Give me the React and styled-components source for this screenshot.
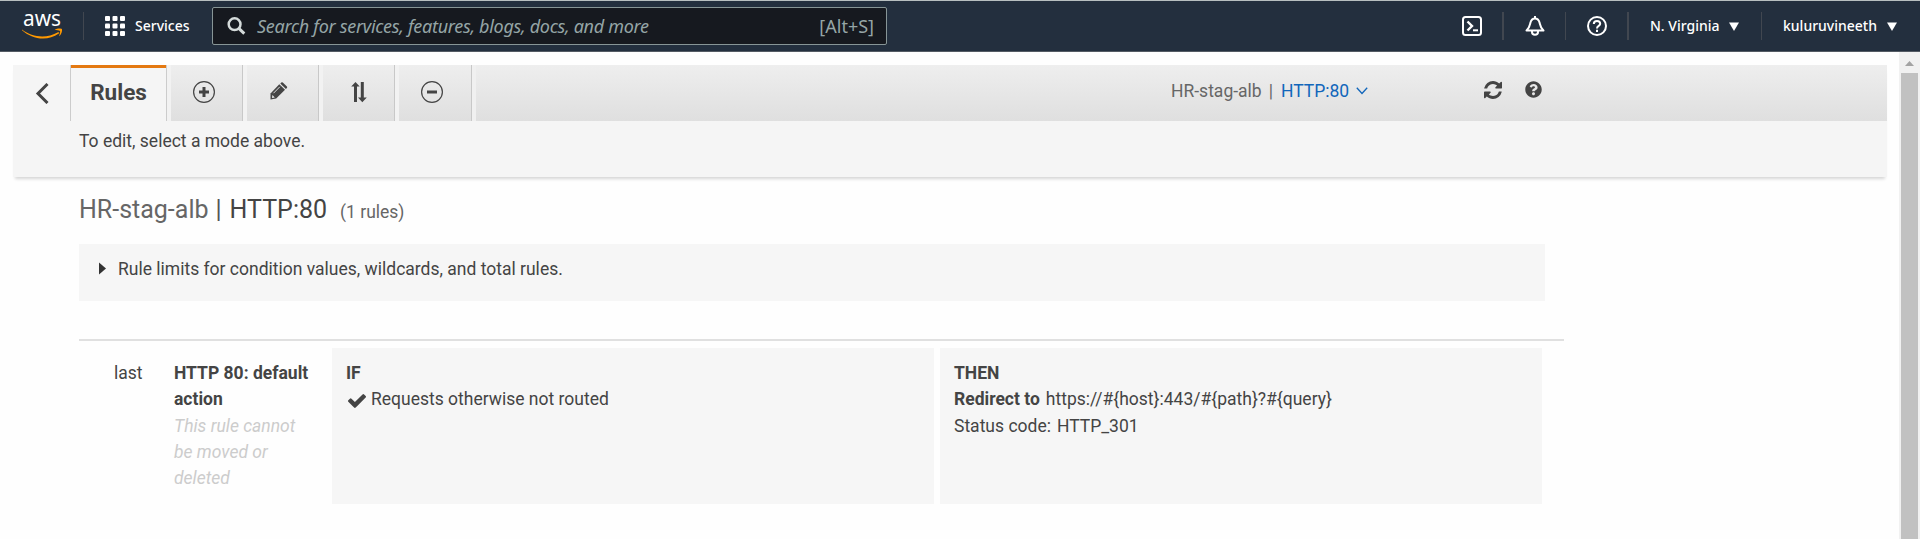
import React from "react";
import styled, { createGlobalStyle } from "styled-components";
import { FaQuestionCircle } from "react-icons/fa";

const Global = createGlobalStyle`
  * { box-sizing: border-box; }
  html, body { margin: 0; padding: 0; }
  body { background: #fefefe; overflow: hidden; font-family: Roboto, "Liberation Sans", sans-serif; font-size: 17.5px; color: #444; }
  svg { display: block; flex: none; }
`;

const Page = styled.div`
  width: 1920px;
  height: 539px;
  display: flex;
  flex-direction: column;
  overflow: hidden;
`;

const Header = styled.header`
  height: 52px;
  flex: none;
  display: flex;
  align-items: center;
  background: #232f3e;
  border-top: 1px solid #b8bfc0;
  border-bottom: 1px solid #545b64;
  font-family: "Noto Sans", "Open Sans", sans-serif;
  color: #fff;
`;

const LogoLink = styled.div`
  width: 83px;
  padding-left: 22px;
`;

const Divider = styled.i`
  width: ${(p) => p.$w || 1}px;
  height: 28px;
  flex: none;
  background: #414750;
`;

const Services = styled.div`
  width: 128px;
  display: flex;
  align-items: center;
  gap: 10px;
  padding-left: 21px;
`;

const NavLabel = styled.span`
  font-size: 14px;
  line-height: 20px;
  font-weight: 550;
  white-space: nowrap;
`;

const Search = styled.div`
  width: 675px;
  height: 38px;
  display: flex;
  align-items: center;
  padding: 0 12px 0 14px;
  background: #16191f;
  border: 1px solid #879596;
  border-radius: 2px;
  color: #95a5a6;
  font-size: 18px;
  line-height: 24px;
`;

const Placeholder = styled.span`
  flex: 1;
  margin-left: 11px;
  font-style: italic;
  letter-spacing: -0.3px;
  white-space: nowrap;
`;

const Shortcut = styled.span`
  white-space: nowrap;
`;

const HeaderRight = styled.div`
  margin-left: auto;
  height: 100%;
  display: flex;
  align-items: center;
`;

const IconCell = styled.div`
  width: ${(p) => p.$w}px;
  display: flex;
  padding-left: ${(p) => p.$pad}px;
`;

const Menu = styled.div`
  width: ${(p) => p.$w}px;
  padding: 0 ${(p) => p.$r}px 0 21px;
  display: flex;
  align-items: center;
  justify-content: space-between;
`;

const Body = styled.div`
  flex: 1;
  min-height: 0;
  display: flex;
`;

const Content = styled.main`
  flex: 1;
  padding: 13px 12px 0 13px;
`;

const Scrollbar = styled.aside`
  width: 21px;
  background: #f1f1f1;
  display: flex;
  flex-direction: column;
  align-items: center;
`;

const ScrollArrow = styled.div`
  height: 21px;
  padding-top: 9px;
`;

const ScrollThumb = styled.div`
  width: 17px;
  flex: 1;
  background: #c1c1c1;
`;

const Toolbar = styled.section`
  height: 112px;
  background: #f5f5f5;
  box-shadow: 0 4px 3px -2px rgba(0, 0, 0, 0.16);
`;

const TabRow = styled.div`
  height: 56px;
  display: flex;
`;

const BackButton = styled.div`
  width: 57px;
  padding: 18px 0 0 22px;
`;

const ActiveTab = styled.div`
  width: 97px;
  border-left: 1px solid #ccc;
  border-right: 1px solid #ccc;
  background: linear-gradient(#e47911, #e47911) top / 100% 3px no-repeat;
  font-size: 22.5px;
  font-weight: 700;
  line-height: 54px;
  text-align: center;
`;

const Tab = styled.div`
  width: ${(p) => p.$w || 76}px;
  border-left: 4px solid #f2f2f2;
  border-right: 1px solid #c8c8c8;
  background: linear-gradient(#eee, #dfdfdf);
  background-clip: padding-box;
  display: flex;
  justify-content: center;
  padding: ${(p) => p.$pad || "15px 6px 0 0"};
`;

const TabFill = styled.div`
  flex: 1;
  border-left: 4px solid #f0f0f0;
  background: linear-gradient(#eee, #dfdfdf);
  background-clip: padding-box;
  display: flex;
  align-items: flex-start;
  padding: 15px 0 0 695px;
  line-height: 22px;
  white-space: nowrap;
`;

const Muted = styled.span`
  color: #666;
`;

const Pipe = styled.span`
  color: ${(p) => p.$color || "#666"};
  margin: 0 ${(p) => p.$gap + 1}px 0 ${(p) => p.$gap}px;
`;

const ListenerLink = styled.span`
  color: #1166bb;
  display: flex;
  gap: 7px;
`;

const Chevron = styled.svg`
  margin-top: 7px;
`;

const ToolIcons = styled.div`
  display: flex;
  gap: 23px;
  margin: 1px 0 0 116px;
  color: #444;
`;

const ModeHint = styled.p`
  margin: 0;
  padding: 8px 0 0 66px;
  line-height: 24px;
`;

const Details = styled.section`
  padding-left: 66px;
`;

const Title = styled.h1`
  margin: 0;
  height: 67px;
  padding-top: 18px;
  font-size: 25px;
  line-height: 30px;
  font-weight: 400;
  display: flex;
  align-items: baseline;
`;

const RuleCount = styled.small`
  font-size: 17.5px;
  color: #666;
  margin-left: 13px;
`;

const Limits = styled.div`
  width: 1466px;
  height: 57px;
  padding: 13px 0 0 20px;
  display: flex;
  gap: 12px;
  background: #f6f6f6;
  line-height: 24px;
`;

const LimitsArrow = styled.svg`
  margin-top: 5px;
`;

const RuleTable = styled.div`
  width: 1485px;
  margin-top: 38px;
  padding-top: 7px;
  border-top: 2px solid #e0e0e0;
`;

const RuleRow = styled.div`
  height: 156px;
  display: flex;
  line-height: 26.25px;
`;

const Order = styled.div`
  width: 94px;
  padding: 12px 0 0 35px;
`;

const RuleName = styled.div`
  width: 159px;
  padding: 12px 7px 0 1px;
  font-weight: 700;
`;

const Note = styled.em`
  display: block;
  width: 135px;
  font-weight: 400;
  color: #ccc;
`;

const RuleCell = styled.div`
  width: 602px;
  margin-right: 6px;
  padding: 12px 13px 12px 14px;
  background: #f6f6f6;
`;

const Line = styled.div`
  display: flex;
  gap: 6px;
`;

const Condition = styled(Line)`
  padding-left: 2px;
  gap: 5px;
`;

const CheckIcon = styled.svg`
  margin-top: 8px;
`;

const AwsLogo = () => (
  <svg width="40" height="50" viewBox="0 -11 40 50">
    <text x="1" y="14" fill="#fff" fontSize="22" fontFamily="Noto Sans, sans-serif" textLength="38" lengthAdjust="spacingAndGlyphs">aws</text>
    <path d="M0 17.6 C11 26 25 26.5 36 20.3 C37.3 19.8 37.6 21 36.8 21.6 C25 30 9.5 27 0 18.3 Z" fill="#f90" />
    <path d="M32.6 18 C35 16.2 39.3 16.3 40 17.2 C40.5 18.5 39.2 22.8 37.2 24.3 C36.9 24.3 38.6 20 38 19 C37.2 18.1 34 18.5 32.6 18Z" fill="#f90" />
  </svg>
);

const GridIcon = () => (
  <svg width="20" height="20" fill="#fff">
    {[0, 7.5, 15].map((y) => [0, 7.5, 15].map((x) => <rect key={`${x}-${y}`} x={x} y={y} width="5" height="5" rx="1" />))}
  </svg>
);

const Caret = () => (
  <svg width="10" height="9"><path d="M0 0.5H10L5 9Z" fill="#fff" /></svg>
);

const RingIcon = ({ plus }) => (
  <svg width="24" height="24" viewBox="0 0 24 24" fill="none" stroke="#444">
    <circle cx="12" cy="12" r="10.4" strokeWidth="1.2" />
    <path d={plus ? "M7 12H17M12 7V17" : "M7 12H17"} strokeWidth="3" />
  </svg>
);

const PencilIcon = () => (
  <svg width="18" height="18" viewBox="0 0 18 18">
    <path d="M0.5 17.5V11.5L9.3 2.2L15 7.8L6.2 16.6Z" fill="#444" />
    <path d="M10.3 1.5L11.3 0.6Q12 0 12.8 0.6L16.9 4.6Q17.5 5.3 16.9 6L15.9 7Z" fill="#444" />
    <path d="M3.5 11.2L9.8 4.8" stroke="#ddd" strokeWidth="1" />
    <path d="M2 15.9L2.4 13.1L4.8 15.4Z" fill="#e6e6e6" />
  </svg>
);

export default function App() {
  return (
    <Page>
      <Global />
      <Header>
        <LogoLink><AwsLogo /></LogoLink>
        <Divider />
        <Services><GridIcon /><NavLabel>Services</NavLabel></Services>
        <Search>
          <svg width="19" height="18" viewBox="0 0 19 18" fill="none" stroke="#d5dbdb" strokeWidth="2.5">
            <circle cx="7.6" cy="7.2" r="5.9" />
            <path d="M11.8 11.4L17.3 16.6" strokeWidth="3" />
          </svg>
          <Placeholder>Search for services, features, blogs, docs, and more</Placeholder>
          <Shortcut>[Alt+S]</Shortcut>
        </Search>
        <HeaderRight>
          <IconCell $w={40} $pad={0}>
            <svg width="20" height="20" fill="none" stroke="#fff" strokeWidth="2">
              <rect x="1" y="1" width="18" height="18" rx="2.5" />
              <path d="M5.5 5.5L10 10L5.5 14.5" strokeWidth="2.4" /><path d="M11 14.3H16" />
            </svg>
          </IconCell>
          <Divider $w={2} />
          <IconCell $w={61} $pad={21}>
            <svg width="20" height="20" fill="none" stroke="#fff" strokeWidth="2" strokeLinejoin="round">
              <path d="M10 0V2M1.5 14.5C4.5 12 4.8 9.5 5.4 6.8C6.1 3.6 8 2.4 10 2.4S13.9 3.6 14.6 6.8C15.2 9.5 15.5 12 18.5 14.5Z" />
              <path d="M7 15V16A3 2.8 0 0 0 13 16V15" />
            </svg>
          </IconCell>
          <Divider />
          <IconCell $w={61} $pad={21}>
            <svg width="20" height="20" fill="none" stroke="#fff" strokeWidth="2">
              <circle cx="10" cy="10" r="9" />
              <path d="M6.8 8C6.8 3.8 13.2 4 13.2 7.8C13.2 10 10 9.8 10 12.4M10 13.7V16" />
            </svg>
          </IconCell>
          <Divider $w={2} />
          <Menu $w={132} $r={22}><NavLabel>N. Virginia</NavLabel><Caret /></Menu>
          <Divider />
          <Menu $w={158} $r={23}><NavLabel>kuluruvineeth</NavLabel><Caret /></Menu>
        </HeaderRight>
      </Header>
      <Body>
        <Content>
          <Toolbar>
            <TabRow>
              <BackButton>
                <svg width="14" height="21" fill="none" stroke="#444" strokeWidth="3"><path d="M12.5 1L3 10.5L12.5 20" /></svg>
              </BackButton>
              <ActiveTab>Rules</ActiveTab>
              <Tab><RingIcon plus /></Tab>
              <Tab $pad="17px 8px 0 0"><PencilIcon /></Tab>
              <Tab $pad="16px 0 0 0">
                <svg width="16" height="22" fill="#444"><path d="M4.5 1L8.7 5.5H6V21H3V5.5H0.2Z M9.8 1H12.8V16.5H15.8L11.3 21.2L7 16.5H9.8Z" /></svg>
              </Tab>
              <Tab $w={77}><RingIcon /></Tab>
              <TabFill>
                <Muted>HR-stag-alb</Muted><Pipe $gap={7}>|</Pipe>
                <ListenerLink>HTTP:80
                  <Chevron width="12" height="8" fill="none" stroke="currentColor" strokeWidth="1.3"><path d="M0.8 0.8L6 6.5L11.2 0.8" /></Chevron>
                </ListenerLink>
                <ToolIcons>
                  <svg width="18" height="18" viewBox="128 128 1536 1536" fill="currentColor"><path d="M1639 1056q0 5-1 7-64 268-268 434.5t-478 166.5q-146 0-282.5-55t-243.5-157l-129 129q-19 19-45 19t-45-19-19-45v-448q0-26 19-45t45-19h448q26 0 45 19t19 45-19 45l-137 137q71 66 161 102t187 36q134 0 250-65t186-179q11-17 53-117 8-23 30-23h192q13 0 22.5 9.5t9.5 22.5zm25-800v448q0 26-19 45t-45 19h-448q-26 0-45-19t-19-45 19-45l138-138q-148-137-349-137-134 0-250 65t-186 179q-11 17-53 117-8 23-30 23h-199q-13 0-22.5-9.5t-9.5-22.5v-7q65-268 270-434.5t480-166.5q146 0 284 55.5t245 156.5l130-129q19-19 45-19t45 19 19 45z" /></svg>
                  <FaQuestionCircle size={17} />
                </ToolIcons>
              </TabFill>
            </TabRow>
            <ModeHint>To edit, select a mode above.</ModeHint>
          </Toolbar>
          <Details>
            <Title>
              <Muted>HR-stag-alb</Muted><Pipe $gap={7} $color="#555">|</Pipe>HTTP:80<RuleCount>(1 rules)</RuleCount>
            </Title>
            <Limits>
              <LimitsArrow width="7" height="13"><path d="M0 0.5L7 6.5L0 12.5Z" fill="#333" /></LimitsArrow>
              <span>Rule limits for condition values, wildcards, and total rules.</span>
            </Limits>
            <RuleTable>
              <RuleRow>
                <Order>last</Order>
                <RuleName>HTTP 80: default action<Note>This rule cannot be moved or deleted</Note></RuleName>
                <RuleCell>
                  <b>IF</b>
                  <Condition>
                    <CheckIcon width="18" height="14" viewBox="121 334 1550 1188" fill="#444"><path d="M1671 566q0 40-28 68l-724 724-136 136q-28 28-68 28t-68-28l-136-136-362-362q-28-28-28-68t28-68l136-136q28-28 68-28t68 28l294 295 656-657q28-28 68-28t68 28l136 136q28 28 28 68z" /></CheckIcon>
                    <span>Requests otherwise not routed</span>
                  </Condition>
                </RuleCell>
                <RuleCell>
                  <b>THEN</b>
                  <Line><b>Redirect to</b><span>{"https://#{host}:443/#{path}?#{query}"}</span></Line>
                  <Line><span>Status code:</span><span>HTTP_301</span></Line>
                </RuleCell>
              </RuleRow>
            </RuleTable>
          </Details>
        </Content>
        <Scrollbar>
          <ScrollArrow><svg width="9" height="5"><path d="M0 5L4.5 0L9 5Z" fill="#a3a3a3" /></svg></ScrollArrow>
          <ScrollThumb />
        </Scrollbar>
      </Body>
    </Page>
  );
}
